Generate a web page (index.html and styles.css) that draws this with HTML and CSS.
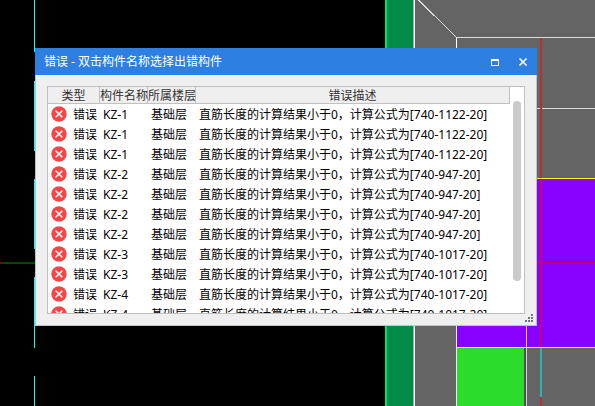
FILE: index.html
```html
<!DOCTYPE html>
<html lang="zh-CN">
<head>
    <meta charset="UTF-8">
    <meta name="viewport" content="width=device-width, initial-scale=1.0">
    <title>错误</title>
    <link rel="stylesheet" href="styles.css">
</head>
<body>
    <svg class="plano" aria-hidden="true" shape-rendering="crispEdges">
        <!-- axis lines on the left -->
        <rect class="cyan" x="34" y="0" width="1" height="52"/>
        <rect class="cyan" x="34" y="81" width="1" height="70"/>
        <rect class="cyan" x="34" y="179" width="1" height="70"/>
        <rect class="cyan" x="34" y="277" width="1" height="71"/>
        <rect class="cyan" x="34" y="376" width="1" height="30"/>
        <rect fill="#004800" x="0" y="262" width="36" height="2"/>
        <rect fill="#800000" x="0" y="262" width="2" height="2"/>

        <!-- wall -->
        <rect fill="#646464" x="415" y="0" width="100%" height="100%"/>
        <rect fill="#008c46" x="385" y="0" width="28" height="100%"/>
        <rect fill="#00e070" x="385" y="0" width="2" height="100%"/>
        <rect fill="#8cc0a0" x="413" y="0" width="1" height="100%"/>
        <rect fill="#ffffff" x="414" y="0" width="1" height="100%"/>

        <!-- slabs and column -->
        <rect fill="#8800ff" x="457" y="179" width="100%" height="168"/>
        <rect fill="#ffff00" x="457" y="178" width="100%" height="1"/>
        <rect fill="#2cdc2c" x="457" y="348" width="67" height="100%"/>
        <rect fill="#505050" x="524" y="348" width="2" height="100%"/>
        <path d="M418.500 0L456.500 37.500" stroke="#dcdcdc" fill="none"/>
        <rect class="line" x="456" y="37" width="100%" height="1"/>
        <rect class="line" x="537" y="108" width="100%" height="1"/>
        <rect fill="#ffffff" x="456" y="38" width="1" height="100%"/>
        <rect fill="#dcc8e8" x="526" y="320" width="1" height="100%"/>
        <rect fill="#fff060" x="457" y="347" width="100%" height="1"/>

        <!-- centre lines -->
        <rect fill="#b03232" x="540" y="38" width="2" height="140"/>
        <rect fill="#c40078" x="540" y="179" width="2" height="168"/>
        <rect fill="#c40078" x="537" y="262" width="100%" height="2"/>
        <rect fill="#32b0b0" x="540" y="348" width="2" height="49"/>
        <rect fill="#b03232" x="540" y="397" width="2" height="100%"/>
    </svg>

    <section class="ventana" role="dialog" aria-labelledby="titulo">
        <header class="barra">
            <h1 id="titulo">错误 - 双击构件名称选择出错构件</h1>
            <button type="button" aria-label="最大化">
                <svg width="10" height="10" shape-rendering="crispEdges"><path d="M1 2h8v7h-8z" fill="#fff"/><path d="M2 4h6v4h-6z" fill="#2d80e2"/></svg>
            </button>
            <button type="button" aria-label="关闭">
                <svg width="10" height="10"><path d="M1.500 1.500L8.500 8.500M8.500 1.500L1.500 8.500" stroke="#fff" stroke-width="1.700"/></svg>
            </button>
        </header>

        <div class="lista">
            <table>
                <colgroup>
                    <col class="tipo">
                    <col class="corta">
                    <col class="corta">
                    <col>
                </colgroup>
                <thead>
                    <tr><th>类型</th><th>构件名称</th><th>所属楼层</th><th>错误描述</th></tr>
                </thead>
                <tbody id="filas"></tbody>
            </table>
            <div class="scroll"><div class="pulgar"></div></div>
        </div>

        <svg class="esquina" width="8" height="8" shape-rendering="crispEdges" aria-hidden="true">
            <path d="M6 0h2v2h-2zM3 3h2v2h-2zM6 3h2v2h-2zM0 6h2v2h-2zM3 6h2v2h-2zM6 6h2v2h-2z" fill="#70747c"/>
        </svg>
    </section>

    <script src="script.js"></script>
</body>
</html>
```
FILE: styles.css
```css
body {
    margin: 0;
    min-height: 100vh;
    overflow: hidden;
    background: #000;
    font-family: "Noto Sans", "Noto Sans CJK SC", sans-serif;
    font-size: 12px;
    color: #000;
}

.plano {
    position: fixed;
    inset: 0;
    width: 100%;
    height: 100%;
}

.cyan {
    fill: #00ffff;
}

.line {
    fill: #dcdcdc;
}

/* floating window over the drawing */
.ventana {
    position: absolute;
    left: 35px;
    top: 48px;
    box-sizing: border-box;
    width: 502px;
    height: 278px;
    display: flex;
    flex-direction: column;
    background: #efefef;
    border: 1px solid #c0c0c8;
    border-top: none;
}

.barra {
    display: flex;
    align-items: center;
    height: 27px;
    margin: 0 -1px;
    padding-left: 9px;
    background: #2d80e2;
    color: #fff;
}

.barra h1 {
    flex: 1;
    margin: 0;
    font-size: 12px;
    font-weight: normal;
    line-height: 27px;
}

.barra button {
    display: flex;
    align-items: center;
    justify-content: center;
    width: 28px;
    height: 27px;
    padding: 0;
    border: none;
    background: none;
}

.lista {
    flex: 1;
    min-height: 0;
    display: flex;
    margin: 11px;
    border: 1px solid #c0c0c0;
    background: #fff;
    overflow: hidden;
}

table {
    width: 100%;
    min-width: 0;
    align-self: flex-start;
    table-layout: fixed;
    border-collapse: separate;
    border-spacing: 0;
}

.tipo {
    width: 52px;
}

.corta {
    width: 48px;
}

th {
    box-sizing: border-box;
    height: 17px;
    padding: 1px 0 0;
    background: #efefef;
    border-right: 1px solid #c0c0c0;
    border-bottom: 1px solid #c0c0c0;
    color: #333;
    font-weight: normal;
    line-height: 15px;
    white-space: nowrap;
}

td {
    height: 18px;
    padding: 2px 0 0 3px;
    line-height: 18px;
    white-space: nowrap;
}

.estado {
    display: flex;
    align-items: flex-start;
    gap: 6px;
}

.estado svg {
    flex: none;
}

.scroll {
    flex: none;
    width: 14px;
    padding: 14px 3px 0;
    box-sizing: border-box;
}

.pulgar {
    height: 180px;
    border-radius: 4px;
    background: #cacaca;
}

.esquina {
    position: absolute;
    right: 3px;
    bottom: 3px;
}
```
FILE: script.js
```js
const errores = [
    ['KZ-1', '740-1122-20'],
    ['KZ-1', '740-1122-20'],
    ['KZ-1', '740-1122-20'],
    ['KZ-2', '740-947-20'],
    ['KZ-2', '740-947-20'],
    ['KZ-2', '740-947-20'],
    ['KZ-2', '740-947-20'],
    ['KZ-3', '740-1017-20'],
    ['KZ-3', '740-1017-20'],
    ['KZ-4', '740-1017-20'],
    ['KZ-4', '740-1017-20']
];

const icono = '<svg width="16" height="16"><circle cx="8" cy="8" r="7.700" fill="#f44646"/>' +
    '<path d="M4.700 4.700L11.300 11.300M11.300 4.700L4.700 11.300" stroke="#fff" stroke-width="1.500"/></svg>';

document.getElementById('filas').innerHTML = errores.map(([nombre, formula]) => `
    <tr>
        <td><div class="estado">${icono}<span>错误</span></div></td>
        <td>${nombre}</td>
        <td>基础层</td>
        <td>直筋长度的计算结果小于0，计算公式为[${formula}]</td>
    </tr>`).join('');
```
